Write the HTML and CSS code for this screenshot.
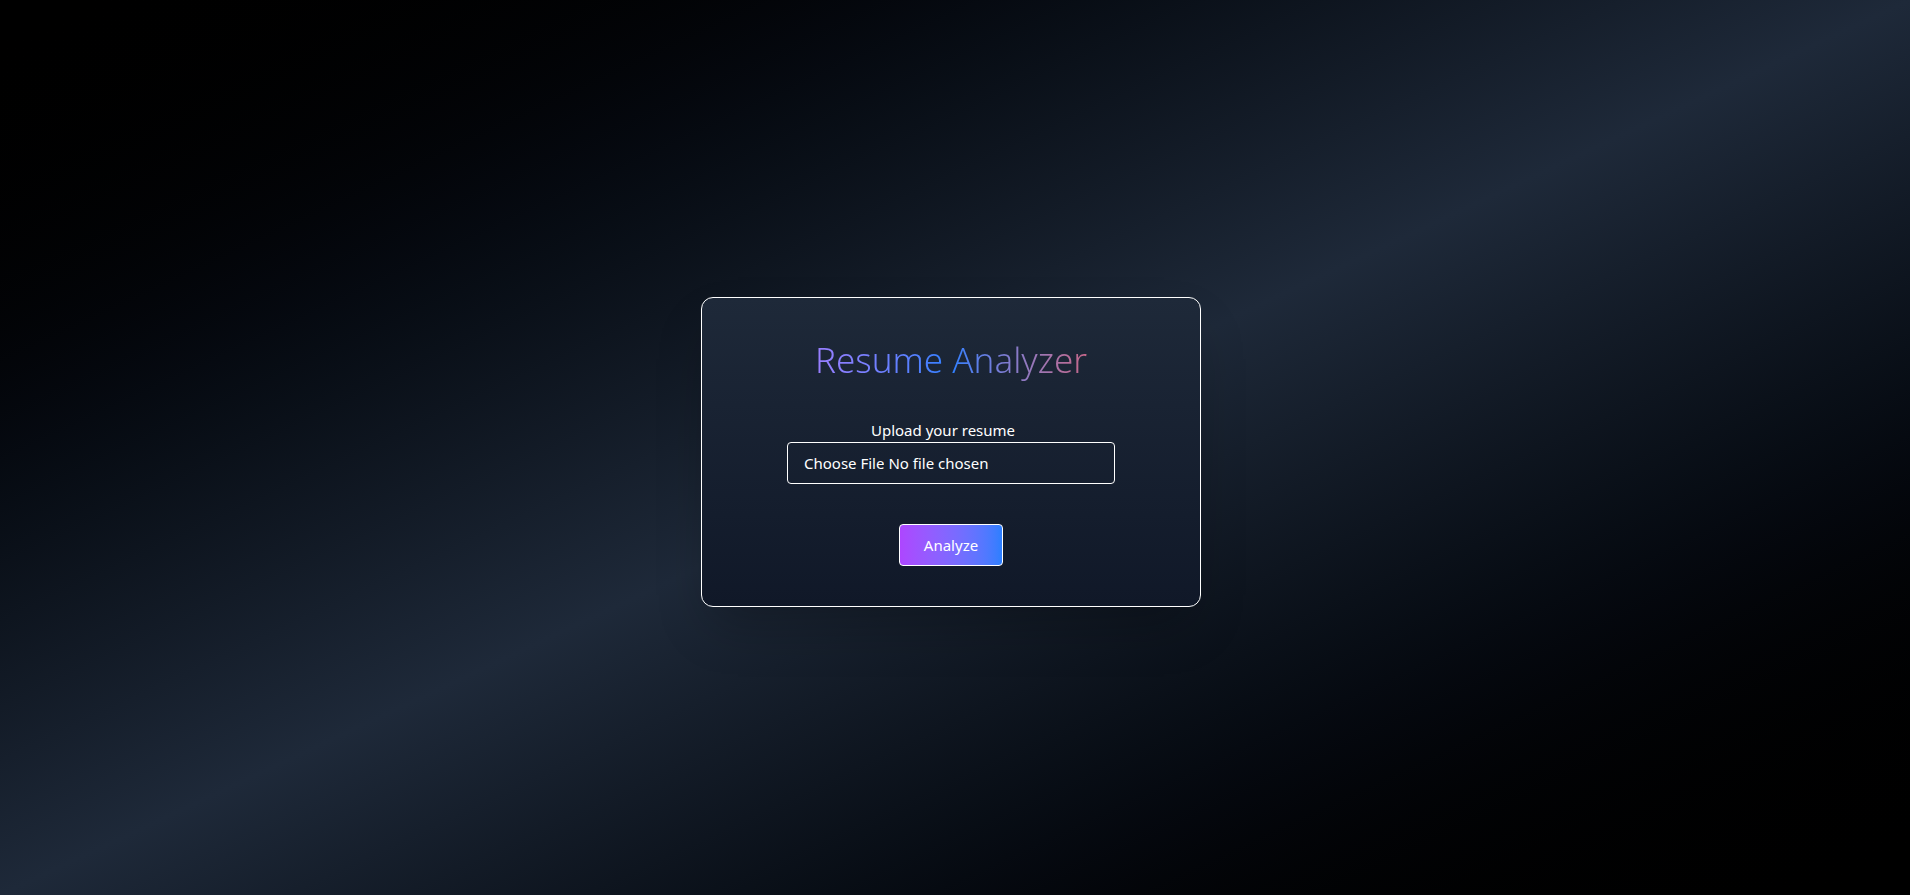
FILE: index.html
```html
<!DOCTYPE html>
<html lang="en">
<head>
<meta charset="utf-8">
<meta name="viewport" content="width=device-width, initial-scale=1">
<title>Resume Analyzer</title>
<link rel="stylesheet" href="styles.css">
</head>
<body>
<main class="page">
  <section class="card">
    <h1 class="title">Resume Analyzer</h1>
    <form class="form">
      <div class="field">
        <label class="label" for="resume">Upload your resume</label>
        <input class="file" type="file" id="resume" name="resume">
      </div>
      <button class="submit" type="submit">Analyze</button>
    </form>
  </section>
</main>
</body>
</html>
```
FILE: styles.css
```css
* {
  box-sizing: border-box;
  margin: 0;
}

body {
  background: #000;
  color: #fff;
  font: 15px/24px "Segoe UI", "Noto Sans", sans-serif;
}

.page {
  display: flex;
  align-items: center;
  justify-content: center;
  min-height: 100vh;
  padding: 8px 8px 0 0;
  background: linear-gradient(to bottom right in oklab, #000, #1e2939, #000);
}

.card {
  display: flex;
  flex-direction: column;
  gap: 36px;
  width: 100%;
  max-width: 500px;
  padding: 40px;
  border: 1px solid #fff;
  border-radius: 12px;
  background: linear-gradient(to bottom in oklab, #1e2939, #101828);
  box-shadow: 0 25px 50px -12px rgb(0 0 0 / 25%);
  text-align: center;
}

.title {
  background: linear-gradient(to right in oklab, #c27aff, #2b7fff, #fb2c36);
  background-clip: text;
  color: transparent;
  font-size: 35px;
  font-weight: 300;
  line-height: 44px;
}

.form {
  display: flex;
  flex-direction: column;
  align-items: center;
  gap: 40px;
}

.field {
  display: flex;
  flex-direction: column;
  align-items: center;
}

.label {
  margin-right: 16px;
}

.file {
  width: 328px;
  max-width: 100%;
  padding: 8px 16px;
  border: 1px solid #fff;
  border-radius: 4px;
  color: inherit;
  font: inherit;
}

.file::file-selector-button {
  margin: 0 4px 0 0;
  padding: 0;
  border: 0;
  background: transparent;
  color: inherit;
  font: inherit;
}

.submit {
  padding: 8px 24px;
  border: 1px solid #fff;
  border-radius: 4px;
  background: linear-gradient(to right in oklab, #ad46ff, #2b7fff);
  color: #fff;
  font: inherit;
}
```
